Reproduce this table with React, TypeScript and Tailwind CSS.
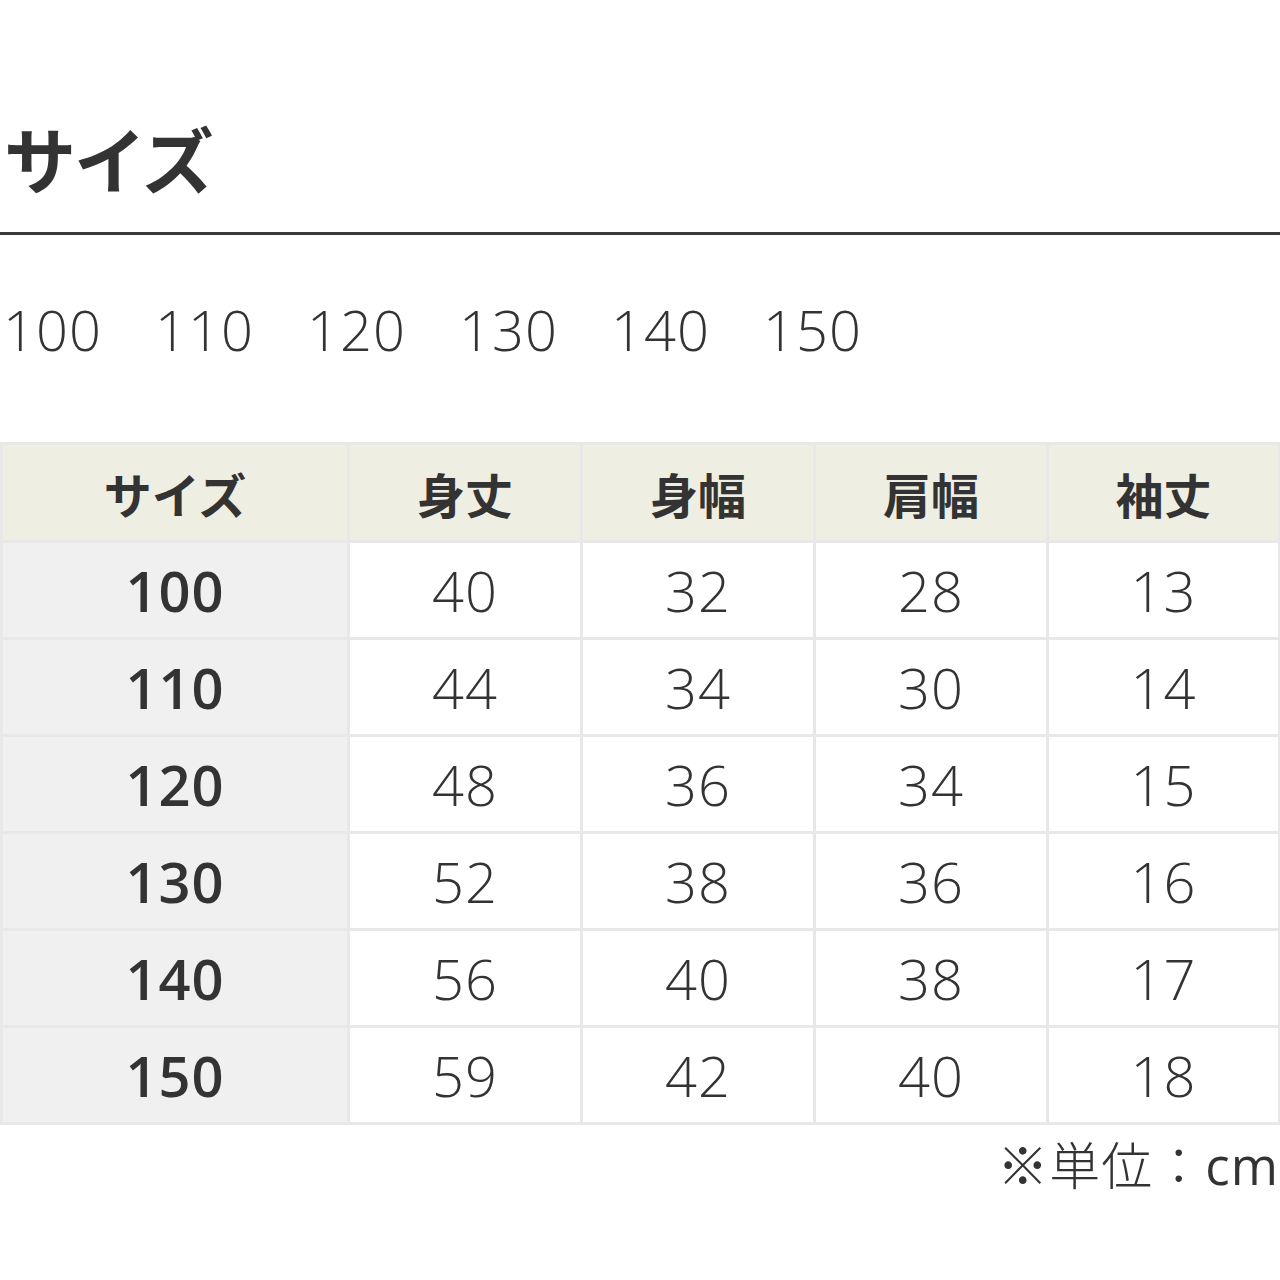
import React from "react";

const rows = [
  ["100", "40", "32", "28", "13"],
  ["110", "44", "34", "30", "14"],
  ["120", "48", "36", "34", "15"],
  ["130", "52", "38", "36", "16"],
  ["140", "56", "40", "38", "17"],
  ["150", "59", "42", "40", "18"],
];

const heads = ["サイズ", "身丈", "身幅", "肩幅", "袖丈"];

const num = { fontFamily: '"Open Sans", "Noto Sans CJK JP", sans-serif' };

export default function App() {
  return (
    <div
      className="w-[1280px] h-[1280px] bg-white text-[#333] overflow-hidden"
      style={{ fontFamily: '"Noto Sans CJK JP", "Noto Sans", sans-serif' }}
    >
      <div className="pt-[113px] pl-[4px] text-[72px] font-bold leading-[88px] tracking-[-2px]">
        サイズ
      </div>
      <div className="mt-[31px] border-t-[3px] border-[#3a3a3a]" />
      <div
        className="mt-[54px] pl-[3px] flex gap-[56px] text-[56px] leading-[80px] font-light"
        style={num}
      >
        {["100", "110", "120", "130", "140", "150"].map((s) => (
          <span key={s} className="w-[96px] tracking-[1px]">{s}</span>
        ))}
      </div>
      <div className="mt-[73px] grid grid-cols-[344px_230px_230px_230px_1fr] gap-[3px] bg-[#e8e8e8] p-[3px] pr-[2px]">
        {heads.map((h) => (
          <div
            key={h}
            className="h-[95px] bg-[#efeee3] flex items-center justify-center text-[48px] font-bold"
          >
            {h}
          </div>
        ))}
        {rows.map((r) =>
          r.map((c, i) => (
            <div
              key={r[0] + "-" + i}
              style={num}
              className={
                i === 0
                  ? "h-[94px] bg-[#f0f0f0] flex items-center justify-center text-[56px] font-semibold tracking-[1px]"
                  : "h-[94px] bg-white flex items-center justify-center text-[56px] font-light tracking-[1px]"
              }
            >
              {c}
            </div>
          ))
        )}
      </div>
      <div className="mt-[6px] text-right text-[51px] leading-[64px] pr-[1px] font-light tracking-[1px]">
        ※単位：<span style={num} className="font-normal">cm</span>
      </div>
    </div>
  );
}
